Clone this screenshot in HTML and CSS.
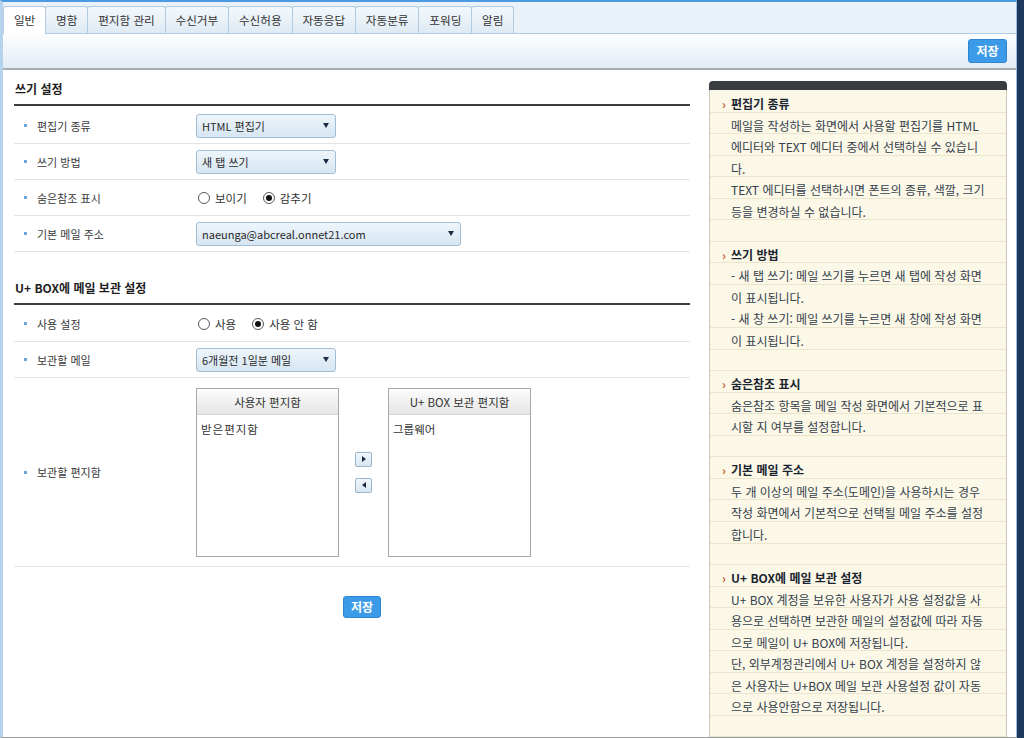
FILE: index.html
```html
<!DOCTYPE html>
<html lang="ko">
<head>
<meta charset="utf-8">
<title>환경설정 - 일반</title>
<link rel="stylesheet" href="styles.css">
</head>
<body>
<div class="window">
  <nav class="tabbar">
    <a class="tab active">일반</a>
    <a class="tab">명함</a>
    <a class="tab">편지함 관리</a>
    <a class="tab">수신거부</a>
    <a class="tab">수신허용</a>
    <a class="tab">자동응답</a>
    <a class="tab">자동분류</a>
    <a class="tab">포워딩</a>
    <a class="tab">알림</a>
  </nav>
  <div class="toolbar"><button class="btn btn-top">저장</button></div>
  <div class="main">
    <div class="settings">
      <section class="group">
        <h2 class="group-title">쓰기 설정</h2>
        <div class="row">
          <div class="label">편집기 종류</div>
          <div class="select"><span>HTML 편집기</span><i class="caret"></i></div>
        </div>
        <div class="row">
          <div class="label">쓰기 방법</div>
          <div class="select"><span>새 탭 쓰기</span><i class="caret"></i></div>
        </div>
        <div class="row">
          <div class="label">숨은참조 표시</div>
          <label class="radio"><i class="dot"></i>보이기</label>
          <label class="radio"><i class="dot checked"></i>감추기</label>
        </div>
        <div class="row">
          <div class="label">기본 메일 주소</div>
          <div class="select wide"><span>naeunga@abcreal.onnet21.com</span><i class="caret"></i></div>
        </div>
      </section>
      <section class="group second">
        <h2 class="group-title">U+ BOX에 메일 보관 설정</h2>
        <div class="row">
          <div class="label">사용 설정</div>
          <label class="radio"><i class="dot"></i>사용</label>
          <label class="radio"><i class="dot checked"></i>사용 안 함</label>
        </div>
        <div class="row">
          <div class="label">보관할 메일</div>
          <div class="select"><span>6개월전 1일분 메일</span><i class="caret"></i></div>
        </div>
        <div class="row row-lists">
          <div class="label">보관할 편지함</div>
          <div class="listbox">
            <div class="list-head">사용자 편지함</div>
            <div class="list-item spaced">받은편지함</div>
          </div>
          <div class="movers">
            <button class="mover"><i class="tri-right"></i></button>
            <button class="mover"><i class="tri-left"></i></button>
          </div>
          <div class="listbox">
            <div class="list-head">U+ BOX 보관 편지함</div>
            <div class="list-item">그룹웨어</div>
          </div>
        </div>
      </section>
      <div class="actions"><button class="btn">저장</button></div>
    </div>
    <aside class="help">
      <div class="help-head"></div>
      <div class="help-body">
        <h3 class="help-title">편집기 종류</h3>
        <p class="ln">메일을 작성하는 화면에서 사용할 편집기를 HTML</p>
        <p class="ln">에디터와 TEXT 에디터 중에서 선택하실 수 있습니</p>
        <p class="ln">다.</p>
        <p class="ln">TEXT 에디터를 선택하시면 폰트의 종류, 색깔, 크기</p>
        <p class="ln">등을 변경하실 수 없습니다.</p>
        <p class="ln blank"></p>
        <h3 class="help-title">쓰기 방법</h3>
        <p class="ln">- 새 탭 쓰기: 메일 쓰기를 누르면 새 탭에 작성 화면</p>
        <p class="ln">이 표시됩니다.</p>
        <p class="ln">- 새 창 쓰기: 메일 쓰기를 누르면 새 창에 작성 화면</p>
        <p class="ln">이 표시됩니다.</p>
        <p class="ln blank"></p>
        <h3 class="help-title">숨은참조 표시</h3>
        <p class="ln">숨은참조 항목을 메일 작성 화면에서 기본적으로 표</p>
        <p class="ln">시할 지 여부를 설정합니다.</p>
        <p class="ln blank"></p>
        <h3 class="help-title">기본 메일 주소</h3>
        <p class="ln">두 개 이상의 메일 주소(도메인)을 사용하시는 경우</p>
        <p class="ln">작성 화면에서 기본적으로 선택될 메일 주소를 설정</p>
        <p class="ln">합니다.</p>
        <p class="ln blank"></p>
        <h3 class="help-title">U+ BOX에 메일 보관 설정</h3>
        <p class="ln">U+ BOX 계정을 보유한 사용자가 사용 설정값을 사</p>
        <p class="ln">용으로 선택하면 보관한 메일의 설정값에 따라 자동</p>
        <p class="ln">으로 메일이 U+ BOX에 저장됩니다.</p>
        <p class="ln">단, 외부계정관리에서 U+ BOX 계정을 설정하지 않</p>
        <p class="ln">은 사용자는 U+BOX 메일 보관 사용설정 값이 자동</p>
        <p class="ln">으로 사용안함으로 저장됩니다.</p>
      </div>
    </aside>
  </div>
</div>
</body>
</html>
```

FILE: styles.css
```css
* { box-sizing: border-box; }
html, body { margin: 0; padding: 0; }
body {
  background: #1d3a5c;
  font-family: "Noto Sans CJK KR", "Noto Sans", sans-serif;
  font-size: 11px;
  color: #3a3a3a;
  overflow: hidden;
}
.window {
  width: 1017px;
  height: 738px;
  background: #fff;
  border-top: 2px solid #4c9be0;
  border-left: 3px solid #b5d3ec;
  border-right: 1px solid #9cbfe0;
  border-bottom: 1px solid #9a9a9a;
  display: flex;
  flex-direction: column;
}
/* tabs */
.tabbar {
  height: 31px;
  flex: none;
  background: #eaf2f9;
  display: flex;
  align-items: flex-end;
}
.tab {
  height: 27px;
  padding: 0 9.9px;
  line-height: 26px;
  font-size: 11.6px;
  color: #333;
  border: 1px solid #b3cbe0;
  border-bottom: none;
  border-radius: 3px 3px 0 0;
  background: linear-gradient(#f3f8fc, #dfeaf3);
  margin-right: -1px;
  cursor: pointer;
}
.tab.active {
  background: #fff;
  height: 28px;
  margin-bottom: -1px;
  position: relative;
  z-index: 1;
}
/* toolbar */
.toolbar {
  height: 37px;
  flex: none;
  border-top: 1px solid #b3cbe0;
  border-bottom: 2px solid #a3abb3;
  background: linear-gradient(#fdfeff, #e2ecf5);
  display: flex;
  justify-content: flex-end;
  align-items: center;
  padding-right: 9px;
}
.btn {
  width: 38px;
  height: 22px;
  padding: 0;
  border: 1px solid #2e86d2;
  border-radius: 3px;
  background: #3c9be8;
  color: #fff;
  font-family: inherit;
  font-size: 12px;
  font-weight: bold;
  line-height: 20px;
  cursor: pointer;
}
.btn-top { width: 39px; height: 24px; }
/* main */
.main {
  flex: 1;
  display: flex;
  padding-left: 11px;
  min-height: 0;
}
.settings { width: 676px; flex: none; }
.group-title {
  margin: 0 0 2px;
  font-size: 12px;
  font-weight: bold;
  color: #1e1e1e;
  line-height: 20px;
  padding: 9px 0 5px 1px;
  border-bottom: 2px solid #3d3d3d;
}
.group.second { margin-top: 17px; }
.group.second .group-title { margin-bottom: 1px; }
.row {
  height: 36px;
  display: flex;
  align-items: center;
  border-bottom: 1px solid #e4e4e4;
}
.label {
  width: 182px;
  flex: none;
  display: flex;
  align-items: center;
  padding-left: 10px;
  color: #3a3a3a;
}
.label::before {
  content: "";
  width: 3px;
  height: 3px;
  background: #6ea5d8;
  margin-right: 10px;
}
.select {
  width: 140px;
  height: 24px;
  display: flex;
  align-items: center;
  justify-content: space-between;
  padding: 0 6px 0 5px;
  border: 1px solid #a3bdd2;
  border-radius: 3px;
  background: linear-gradient(#eef5fb, #d6e6f2);
  color: #2a2a2a;
}
.select.wide { width: 265px; }
.caret {
  width: 0;
  height: 0;
  border-left: 3px solid transparent;
  border-right: 3px solid transparent;
  border-top: 5px solid #1b2c44;
}
.radio {
  display: flex;
  align-items: center;
  margin-left: 2px;
  margin-right: 14px;
  color: #333;
  font-size: 11.5px;
}
.dot {
  width: 12px;
  height: 12px;
  border: 1px solid #5a5a5a;
  border-radius: 50%;
  background: #fff;
  margin-right: 5px;
  display: flex;
  align-items: center;
  justify-content: center;
}
.dot.checked::after {
  content: "";
  width: 6px;
  height: 6px;
  border-radius: 50%;
  background: #111;
}
.row-lists { height: 189px; }
.listbox {
  width: 143px;
  height: 169px;
  border: 1px solid #a8a8a8;
  background: #fff;
}
.list-head {
  height: 26px;
  line-height: 25px;
  padding-top: 1px;
  text-align: center;
  font-size: 11.5px;
  color: #333;
  background: linear-gradient(#fcfcfc, #e6e6e6);
  border-bottom: 1px solid #d6d6d6;
}
.list-item {
  padding: 6px 4px;
  font-size: 11.5px;
  color: #333;
}
.list-item.spaced { letter-spacing: 1px; }
.movers {
  width: 49px;
  display: flex;
  flex-direction: column;
  align-items: center;
  gap: 11px;
}
.mover {
  width: 17px;
  height: 15px;
  padding: 0;
  border: 1px solid #9bb5ca;
  border-radius: 2px;
  background: linear-gradient(#f2f8fc, #d6e6f2);
  display: flex;
  align-items: center;
  justify-content: center;
}
.tri-right {
  width: 0; height: 0;
  border-top: 3px solid transparent;
  border-bottom: 3px solid transparent;
  border-left: 4px solid #1b2c44;
}
.tri-left {
  width: 0; height: 0;
  border-top: 3px solid transparent;
  border-bottom: 3px solid transparent;
  border-right: 4px solid #1b2c44;
}
.actions {
  display: flex;
  justify-content: center;
  padding-left: 20px;
  margin-top: 29px;
}
/* help */
.help {
  width: 298px;
  flex: none;
  margin-left: 19px;
  margin-top: 11px;
  display: flex;
  flex-direction: column;
}
.help-head {
  height: 9px;
  background: #383c40;
  border-radius: 4px 4px 0 0;
}
.help-body {
  flex: 1;
  background-color: #fbf8e7;
  background-image: repeating-linear-gradient(to bottom, transparent 0, transparent 20.55px, #ebe5cd 20.55px, #ebe5cd 21.55px);
  background-position: 0 1px;
  border-left: 1px solid #cdc9b6;
  border-right: 1px solid #cdc9b6;
  padding: 3px 0 0 21px;
  color: #34404c;
  font-size: 12px;
}
.help-title {
  margin: 0;
  font-size: 12px;
  font-weight: bold;
  line-height: 21.55px;
  height: 21.55px;
  color: #1b2530;
}
.help-title::before {
  content: "›";
  color: #c4552b;
  font-weight: bold;
  display: inline-block;
  width: 9px;
  margin-left: -9px;
}
.ln {
  margin: 0;
  line-height: 21.55px;
  height: 21.55px;
  white-space: nowrap;
}
```
